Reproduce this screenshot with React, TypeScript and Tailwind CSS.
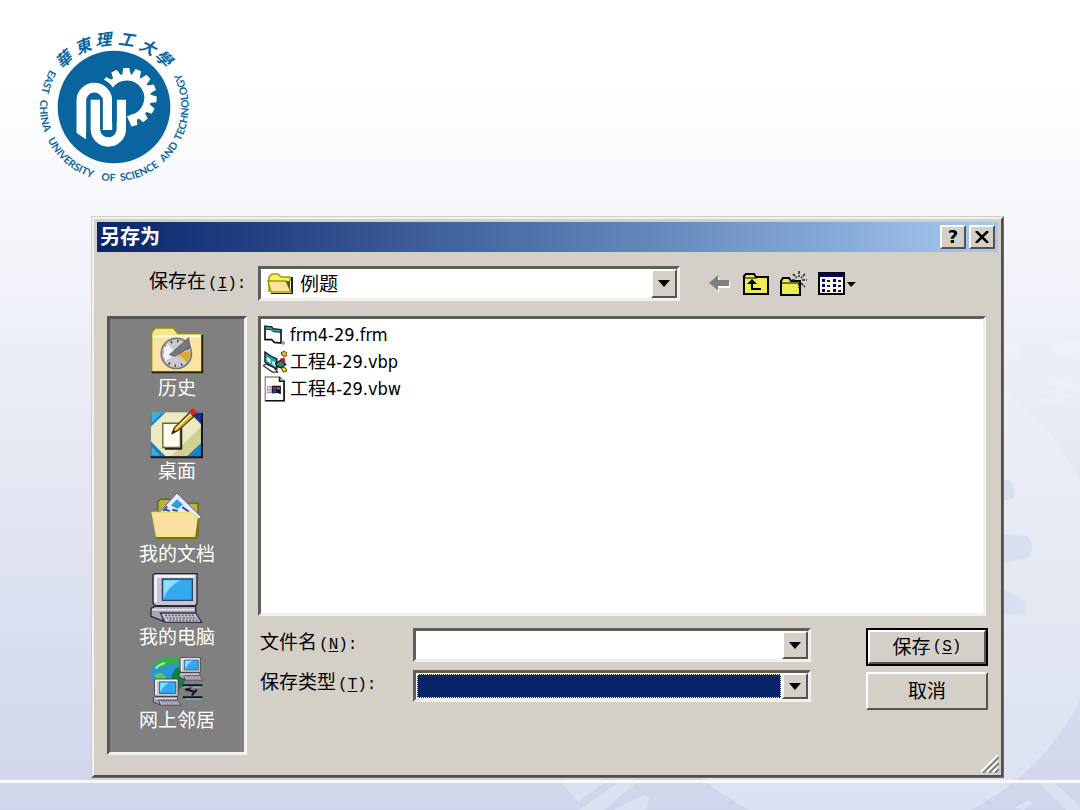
import { useState } from "react";
import type { ReactNode } from "react";

const raised = "bg-[#d4d0c8] border-2 border-t-white border-l-white border-r-[#55534f] border-b-[#55534f]";
const sunken = "bg-white border-[3px] border-t-[#5f5e5c] border-l-[#5f5e5c] border-r-[#f2f0ec] border-b-[#f2f0ec]";

function Backdrop() {
    return (
        <svg className="absolute inset-0 h-full w-full" viewBox="0 0 1080 810" preserveAspectRatio="xMidYMax slice" aria-hidden="true">
            <defs>
                <linearGradient id="disc" x1="0" y1="0" x2="0" y2="1">
                    <stop offset="0" stopColor="#eef1fa" />
                    <stop offset="0.5" stopColor="#e4e8f3" />
                    <stop offset="1" stopColor="#dce1f2" />
                </linearGradient>
            </defs>
            <circle cx="860" cy="590" r="246" fill="url(#disc)" />
            <g fill="#d9dfef">
                <path d="M990 476 L1010 481 Q1018 490 1013 498 L990 506Z" />
                <path d="M990 533 L1028 536 Q1035 546 1030 557 L1004 563 L990 568Z" />
                <path d="M990 582 L1006 590 L1026 603 Q1029 612 1024 615 L990 612Z" />
            </g>
            <g fill="#dce1f1">
                <path d="M562 783 L578 802 L604 783Z" />
                <path d="M579 810 L618 783 L636 783 L604 810Z" />
                <path d="M614 810 L644 795 L650 797 L646 810Z" />
                <path d="M1014 808 L1028 800 L1034 803 L1024 810Z" />
                <path d="M1040 783 L1054 783 L1080 806 V810 L1066 810Z" />
            </g>
            <g fill="#f1f3fb" opacity="0.5">
                <path d="M1048 346 L1080 338 V352 L1060 357Z" />
                <path d="M1050 374 L1080 384 V394 L1046 384Z" />
                <path d="M1040 398 L1072 393 L1062 404 L1040 403Z" />
                <path d="M1006 340 L1024 352 L1018 358 L1004 350Z" />
            </g>
        </svg>
    );
}

const sealChars = [
    { ch: "華", x: 129, y: 131, r: -42 },
    { ch: "東", x: 188, y: 91, r: -22 },
    { ch: "理", x: 250, y: 70, r: -6 },
    { ch: "工", x: 320, y: 70, r: 8 },
    { ch: "大", x: 385, y: 93, r: 28 },
    { ch: "學", x: 433, y: 127, r: 44 },
];

const sealWords = [
    { word: "EAST", offset: 2 },
    { word: "CHINA", offset: 98 },
    { word: "UNIVERSITY", offset: 222 },
    { word: "OF", offset: 430 },
    { word: "SCIENCE", offset: 488 },
    { word: "AND", offset: 632 },
    { word: "TECHNOLOGY", offset: 713 },
];

const teeth = [-52, -27, -2, 22, 46, 70, 94, 118, 142, 166];

function Logo() {
    return (
        <svg className="block h-[185px] w-[190px]" viewBox="0 0 570 555" fill="#0a659f" role="img" aria-label="East China University of Science and Technology">
            <defs>
                <path id="ring" d="M91 162 A223 223 0 1 0 454 133" />
            </defs>
            {sealChars.map((c) => (
                <text
                    key={c.ch}
                    transform={`translate(${c.x} ${c.y}) rotate(${c.r})`}
                    textAnchor="middle"
                    dominantBaseline="central"
                    className="text-[48px] font-bold italic [font-family:'Noto_Sans_CJK_TC',sans-serif]"
                >
                    {c.ch}
                </text>
            ))}
            {sealWords.map((w) => (
                <text key={w.word} className="text-[31px] font-bold [font-family:Lato,sans-serif]">
                    <textPath href="#ring" startOffset={w.offset}>{w.word}</textPath>
                </text>
            ))}
            <circle cx="282" cy="276" r="169" />
            <g fill="#fff">
                {teeth.map((a) => (
                    <path key={a} d="M307 192 L313 159 H331 L337 192Z" transform={`rotate(${a} 322 247)`} />
                ))}
            </g>
            <path d="M270 213 A62 62 0 1 1 330 310" fill="none" stroke="#fff" strokeWidth="20" />
            <g fill="none">
                <path stroke="#0a659f" strokeWidth="46" d="M184 370 V252 A41 41 0 0 1 266 252 V340" />
                <path stroke="#fff" strokeWidth="29" d="M184 351 V257 A39 39 0 0 1 262 257 V345" />
                <path stroke="#0a659f" strokeWidth="10" d="M206 250 V340 A56 56 0 0 0 296 372" />
                <path stroke="#fff" strokeWidth="28" d="M226 254 V342 A39 39 0 0 0 304 342 V254" />
            </g>
            <path fill="#fff" d="M170 350 H198 V373 L170 354Z" />
            <path d="M276 250 H290 V320 H276Z" />
            <path d="M240 248 H248 V342 H240Z" />
        </svg>
    );
}

function Folder({ className }: { className: string }) {
    return (
        <svg className={className} viewBox="0 0 27 22">
            <path d="M2 19 V4 L5 1 H11 L14 4 H23 V8" fill="#f6f06a" stroke="#a39a00" strokeWidth="1.5" />
            <path d="M24 4 H26 V21 H4 V20 H24Z" fill="#222" />
            <path d="M1 8 H19 L24 19 H4Z" fill="#ffe29a" stroke="#a39a00" strokeWidth="1.5" />
            <path d="M19 8 H23 V17Z" fill="#5d5800" />
        </svg>
    );
}

function HistoryIcon() {
    return (
        <svg className="h-12 w-[54px]" viewBox="0 0 156 140">
            <path d="M4 20 L14 6 H68 L80 22 H150 V134 H4Z" fill="#f2e790" stroke="#8f8f00" strokeWidth="4" />
            <path d="M8 32 H148 V128 H8Z" fill="#fbe3a4" />
            <path d="M8 30 H146" stroke="#ffffcf" strokeWidth="5" />
            <path d="M152 26 V135 H4" fill="none" stroke="#222200" strokeWidth="5" />
            <circle cx="76" cy="80" r="44" fill="#c9c9cf" stroke="#77777c" strokeWidth="5" />
            <circle cx="76" cy="80" r="36" fill="none" stroke="#34343a" strokeWidth="7" strokeDasharray="4 15" />
            <path d="M76 80 L120 72 L108 104Z" fill="#dba92b" />
            <path d="M44 102 A42 42 0 0 1 50 52 L76 80Z" fill="#f2f2f2" />
            <path d="M56 84 L112 34 L116 62 L72 88Z" fill="#77777e" stroke="#44444a" strokeWidth="2" />
        </svg>
    );
}

function DesktopIcon() {
    return (
        <svg className="h-[52px] w-[54px]" viewBox="0 0 160 154">
            <path d="M3 16 H152 V146 H3Z" fill="#e6e4b4" />
            <path d="M62 146 L152 58 V106 L112 146Z" fill="#d3ce94" />
            <path d="M44 16 H108 L152 58 L62 146 H44 L3 108 V56Z" fill="#eeedc6" opacity="0.7" />
            <g fill="#1583c8">
                <path d="M3 16 H46 L3 58Z" />
                <path d="M152 16 H118 L152 52Z" fill="#1c2f9b" />
                <path d="M3 146 V102 L46 146Z" />
                <path d="M152 146 V106 L110 146Z" />
            </g>
            <path d="M5 18 H36 L5 48Z" fill="#35aee2" />
            <path d="M5 144 V118 L30 144Z" fill="#35aee2" />
            <path d="M154 18 V149 H2" fill="none" stroke="#111827" strokeWidth="6" />
            <path d="M38 48 H90 V120 H38Z" fill="#fffff1" stroke="#686743" strokeWidth="4" />
            <path d="M93 52 V124 H44" fill="none" stroke="#25251b" strokeWidth="5" />
            <path d="M66 78 L72 62 L118 16 L130 28 L82 70Z" fill="#f0b81f" stroke="#4e3900" strokeWidth="4" />
            <path d="M76 64 L122 20" stroke="#fff0a0" strokeWidth="4" />
            <path d="M116 14 L126 4 L139 12 L130 26Z" fill="#e2201c" />
            <path d="M65 80 L69 68 L76 73Z" fill="#111" />
        </svg>
    );
}

function DocumentsIcon() {
    return (
        <svg className="h-12 w-[54px]" viewBox="0 0 160 146">
            <path d="M22 70 V30 L30 22 H56 L66 34 H144 V130 H30Z" fill="#b9b43e" stroke="#66660a" strokeWidth="4" />
            <path d="M26 62 L80 3 L154 76 L142 86 L60 84Z" fill="#e8ecff" stroke="#5360a8" strokeWidth="3" />
            <path d="M62 40 L80 22 L98 38 L82 52Z" fill="#2b9fd8" />
            <path d="M46 54 L58 58 M66 54 L82 58 M96 46 L116 60 M50 44 L38 58" stroke="#3c4a91" strokeWidth="6" />
            <path d="M4 62 H118 L130 68 L146 80 L138 138 H18Z" fill="#f9dfa0" stroke="#e8e36d" strokeWidth="4" />
            <path d="M16 140 H138 L146 80" fill="none" stroke="#777600" strokeWidth="6" />
        </svg>
    );
}

function Computer({ x = 0, y = 0, scale = 1 }: { x?: number; y?: number; scale?: number }) {
    return (
        <g transform={`translate(${x} ${y}) scale(${scale})`}>
            <path d="M8 6 L14 2 H140 V92 L134 98 H14 L8 90Z" fill="#c9c4d4" stroke="#25252c" strokeWidth="4" />
            <path d="M12 6 H132 V14 H20 V88 H12Z" fill="#f4f1f8" />
            <path d="M36 18 H126 V82 H36Z" fill="#35a9ee" stroke="#27476a" strokeWidth="4" />
            <path d="M40 22 H90 Q54 40 40 76Z" fill="#8ae1ff" />
            <path d="M50 98 H112 L100 108 H62Z" fill="#54505f" />
            <path d="M2 106 L14 100 H136 V122 H38 V144 L2 130Z" fill="#a9a5b1" stroke="#2b2930" strokeWidth="4" />
            <path d="M6 110 H132" stroke="#eae6f0" strokeWidth="5" />
            <path d="M30 120 H136 L154 148 H44Z" fill="#cbc5cf" stroke="#36324b" strokeWidth="4" />
            <path d="M44 127 H134 M48 135 H140 M56 142 H144" stroke="#6e6678" strokeWidth="5" strokeDasharray="6 4" />
        </g>
    );
}

function ComputerIcon() {
    return (
        <svg className="h-[52px] w-[54px]" viewBox="0 0 160 156">
            <Computer />
        </svg>
    );
}

function NetworkIcon() {
    return (
        <svg className="h-[52px] w-[54px]" viewBox="0 0 160 156">
            <circle cx="56" cy="54" r="52" fill="#2697dc" />
            <path d="M10 28 Q36 -4 84 6 L90 20 L70 28 L62 22 L42 34 L24 36Z" fill="#36b04b" />
            <path d="M76 36 L104 34 L108 60 Q102 90 84 102 L74 78 L62 62Z" fill="#15803a" />
            <path d="M12 54 L34 50 L48 64 L34 84 L20 80Z" fill="#58c95a" />
            <path d="M16 38 Q28 24 44 22" stroke="#aef09a" strokeWidth="6" fill="none" />
            <path d="M96 88 H156 M104 100 L136 108 M128 88 L112 100 M140 100 L124 118 M98 124 H156" stroke="#10151d" strokeWidth="6" />
            <path d="M100 93 H152 M104 129 H154" stroke="#77cfe2" strokeWidth="3" />
            <Computer x={86} y={4} scale={0.46} />
            <Computer x={8} y={68} scale={0.54} />
        </svg>
    );
}

const places: { label: string; icon: ReactNode }[] = [
    { label: "历史", icon: <HistoryIcon /> },
    { label: "桌面", icon: <DesktopIcon /> },
    { label: "我的文档", icon: <DocumentsIcon /> },
    { label: "我的电脑", icon: <ComputerIcon /> },
    { label: "网上邻居", icon: <NetworkIcon /> },
];

function FormIcon() {
    return (
        <svg className="h-6 w-6" viewBox="0 0 72 72">
            <path d="M6 10 L26 12 L30 18 L54 20 V60 L34 58 L26 50 L6 50Z" fill="#fff" stroke="#111" strokeWidth="5" />
            <path d="M6 10 L26 12 L30 18 L54 20 V28 L30 26 L24 20 L6 18Z" fill="#21b3b0" stroke="#123" strokeWidth="3" />
            <path d="M60 54 V66 M54 60 H66" stroke="#888" strokeWidth="4" />
        </svg>
    );
}

function ProjectIcon() {
    return (
        <svg className="h-6 w-6" viewBox="0 0 76 72">
            <path d="M1 48 L30 68 H46 L34 52 L8 42Z" fill="#fff" stroke="#333" strokeWidth="4" />
            <path d="M6 4 L26 18 L44 26 V58 L24 48 L6 36Z" fill="#1fa7a2" stroke="#111" strokeWidth="4" />
            <path d="M12 20 L24 28 V40 L12 32Z M30 32 L40 38 V50 L30 44Z" fill="#fff" />
            <path d="M40 40 L58 30 L72 44 L58 54 L44 50Z" fill="#17928d" stroke="#111" strokeWidth="4" />
            <path d="M54 26 L68 22 L70 36 L58 38Z" fill="#c3141b" />
            <path d="M58 6 L68 2 L76 8 V16 L66 18 L60 14Z" fill="#e8c32e" stroke="#443600" strokeWidth="3" />
            <path d="M58 56 L66 52 L74 58 V66 L64 68Z" fill="#e8d02e" stroke="#443600" strokeWidth="3" />
        </svg>
    );
}

function WorkspaceIcon() {
    return (
        <svg className="h-[26px] w-6" viewBox="0 0 72 80">
            <path d="M6 3 H50 L64 16 V76 H6Z" fill="#fff" stroke="#8a8a8a" strokeWidth="4" />
            <path d="M50 3 V16 H64 V76 H6" fill="none" stroke="#111" strokeWidth="5" />
            <path d="M26 30 H54 V56 L44 52 L26 54Z" fill="#111" />
            <path d="M30 34 H40 V42 H30Z" fill="#d92626" />
            <path d="M42 34 H51 V42 H42Z" fill="#2d9b43" />
            <path d="M30 44 H40 V51 H30Z" fill="#2640d9" />
            <path d="M12 34 H28 M12 42 H28 M12 50 H28" stroke="#5a44c9" strokeWidth="5" strokeDasharray="4 3" />
        </svg>
    );
}

const files: { name: string; icon: ReactNode }[] = [
    { name: "frm4-29.frm", icon: <FormIcon /> },
    { name: "工程4-29.vbp", icon: <ProjectIcon /> },
    { name: "工程4-29.vbw", icon: <WorkspaceIcon /> },
];

function Arrow() {
    return (
        <span className={`${raised} flex w-[26px] shrink-0 items-center justify-center`} aria-hidden="true">
            <svg className="h-[7px] w-3" viewBox="0 0 12 7"><path d="M0 0 H12 L6 7Z" fill="#000" /></svg>
        </span>
    );
}

function Key({ letter, colon = true }: { letter: string; colon?: boolean }) {
    return (
        <span className="ml-0.5 text-base leading-6 [font-family:'Liberation_Mono',monospace]">
            (<u className="underline-offset-2">{letter}</u>){colon && ":"}
        </span>
    );
}

function Toolbar() {
    return (
        <div className="flex items-center gap-[11px]">
            <button type="button" aria-label="后退" className="flex w-6 justify-center">
                <svg className="h-[18px] w-[22px]" viewBox="0 0 22 18">
                    <path d="M2 10 L10 2 V7 H21 V13 H10 V18Z" fill="#fff" />
                    <path d="M0 8 L9 0 V5 H20 V11 H9 V16Z" fill="#808080" />
                </svg>
            </button>
            <button type="button" aria-label="向上一级">
                <svg className="h-[22px] w-[26px]" viewBox="0 0 26 22">
                    <path d="M1 21 V3 L3 1 H11 L13 4 H25 V21Z" fill="#ecec55" stroke="#000" strokeWidth="2" />
                    <path d="M1 5 H14" stroke="#000" />
                    <path d="M18 16 H9 V9" fill="none" stroke="#000" strokeWidth="2" />
                    <path d="M4 11 L9 6 L14 11Z" />
                </svg>
            </button>
            <button type="button" aria-label="新建文件夹">
                <svg className="h-[26px] w-[27px]" viewBox="0 0 27 26">
                    <path d="M1 24 V10 L3 7 H9 L11 10 H20 V24Z" fill="#ecec55" stroke="#000" strokeWidth="2" />
                    <path d="M1 12 H19" stroke="#000" />
                    <path d="M19 0 V6 M19 12 V17 M12 9 H16 M22 9 H27 M13 3 L17 7 M25 3 L21 7 M21 12 L25 16" stroke="#222" strokeWidth="1.5" strokeDasharray="3 1" />
                </svg>
            </button>
            <button type="button" aria-label="查看">
                <svg className="h-[23px] w-[38px]" viewBox="0 0 38 23">
                    <path d="M1 1 H26 V22 H1Z" fill="#fff" stroke="#000" strokeWidth="2" />
                    <path d="M1 1 H26 V5 H1Z" fill="#000064" />
                    <path d="M4 7 H7 V10 H4Z M4 12 H7 V15 H4Z M4 17 H7 V20 H4Z M15 7 H18 V10 H15Z M15 12 H18 V15 H15Z M15 17 H18 V20 H15Z" fill="#000080" />
                    <path d="M9 9 H12 M9 14 H12 M9 19 H12 M20 9 H23 M20 14 H23 M20 19 H23" stroke="#222" strokeWidth="2" />
                    <path d="M29 10 H38 L33 15Z" />
                </svg>
            </button>
        </div>
    );
}

function SaveDialog() {
    const [fileName, setFileName] = useState("");

    return (
        <div
            role="dialog"
            aria-labelledby="title"
            className="relative flex flex-col border-[3px] border-t-[#f4f2ee] border-l-[#f4f2ee] border-r-[#504f4d] border-b-[#504f4d] bg-[#d4d0c8] px-[3px] pt-[3px] pb-5 outline-1 -outline-offset-1 outline-[#9a9893]/40"
        >
            <div className="flex h-[30px] items-center gap-[3px] bg-linear-to-r from-[#0a246a] to-[#a6caf0] pr-[3px] pl-[3px]">
                <h1 id="title" className="flex-1 text-xl leading-6 font-bold text-white">另存为</h1>
                <button type="button" aria-label="帮助" className={`${raised} flex h-6 w-[26px] items-center justify-center font-['DejaVu_Sans'] text-lg leading-none font-bold`}>?</button>
                <button type="button" aria-label="关闭" className={`${raised} flex h-6 w-[26px] items-center justify-center`}>
                    <svg className="h-3 w-[14px]" viewBox="0 0 14 12"><path d="M1 0 L13 12 M13 0 L1 12" stroke="#000" strokeWidth="2.5" /></svg>
                </button>
            </div>

            <div className="mt-[14px] flex items-center pl-[52px]">
                <label htmlFor="place" className="w-[109px] shrink-0 pb-0.5 whitespace-nowrap">保存在<Key letter="I" /></label>
                <div className={`${sunken} flex h-[35px] w-[422px] items-stretch`}>
                    <span className="flex items-center pl-1.5"><Folder className="h-[22px] w-[27px]" /></span>
                    <select id="place" className="min-w-0 flex-1 appearance-none bg-transparent pl-1.5 outline-none">
                        <option>例题</option>
                    </select>
                    <Arrow />
                </div>
                <div className="ml-7"><Toolbar /></div>
            </div>

            <div className="mt-[15px] flex gap-[11px] pr-[10px] pl-[10px]">
                <nav className="w-[140px] shrink-0 border-[3px] border-t-[#55555a] border-r-[#f4f2ee] border-b-[#f4f2ee] border-l-[#55555a] bg-[#808080] pt-[5px] pb-[13px]">
                    {places.map((p) => (
                        <button key={p.label} type="button" className="flex h-[83px] w-full flex-col items-center text-white">
                            <span className="flex h-[52px] items-center">{p.icon}</span>
                            <span className="leading-6">{p.label}</span>
                        </button>
                    ))}
                </nav>

                <div className="flex min-w-0 flex-1 flex-col">
                    <ul className={`${sunken} mr-0.5 h-[300px] pt-0.5 pl-0.5 text-lg`}>
                        {files.map((f) => (
                            <li key={f.name} className="flex h-[27px] items-center gap-[3px]">
                                {f.icon}
                                <span className="whitespace-nowrap">{f.name}</span>
                            </li>
                        ))}
                    </ul>

                    <div className="mt-3 flex items-start justify-between">
                        <div className="grid grid-cols-[155px_398px] gap-y-2">
                            <label htmlFor="name" className="pt-0.5 pl-0.5">文件名<Key letter="N" /></label>
                            <div className={`${sunken} flex h-[34px] items-stretch`}>
                                <input
                                    id="name"
                                    type="text"
                                    value={fileName}
                                    onChange={(e) => setFileName(e.target.value)}
                                    className="min-w-0 flex-1 px-1 outline-none"
                                />
                                <Arrow />
                            </div>
                            <label htmlFor="type" className="pl-0.5">保存类型<Key letter="T" /></label>
                            <div className={`${sunken} flex h-8 items-stretch`}>
                                <select id="type" className="m-px min-w-0 flex-1 appearance-none border border-dotted border-[#f5f5b0] bg-[#0a246a] text-white outline-none">
                                    <option></option>
                                </select>
                                <Arrow />
                            </div>
                        </div>
                        <div className="flex w-[122px] flex-col gap-1.5">
                            <button type="submit" className="h-[38px] border-2 border-black">
                                <span className={`${raised} flex h-full items-center justify-center`}>保存<Key letter="S" colon={false} /></span>
                            </button>
                            <button type="button" className={`${raised} h-[38px]`}>取消</button>
                        </div>
                    </div>
                </div>
            </div>

            <svg className="absolute right-0.5 bottom-0.5 h-[18px] w-[18px]" viewBox="0 0 18 18" aria-hidden="true">
                <path d="M0 17 L17 0 M6 17 L17 6 M12 17 L17 12" stroke="#fff" strokeWidth="2" />
                <path d="M2 18 L18 2 M8 18 L18 8 M14 18 L18 14" stroke="#808080" strokeWidth="2" />
            </svg>
        </div>
    );
}

export default function App() {
    return (
        <div className="relative min-h-screen overflow-hidden bg-linear-to-b from-white from-10% via-[#e6e9f4] via-55% to-[#cfd5ea] text-[19px] leading-6 text-black [font-family:'DejaVu_Sans_Condensed','Noto_Sans_CJK_SC',sans-serif]">
            <Backdrop />
            <div className="absolute inset-x-0 bottom-[27px] h-[3px] bg-[#f8f9fd]" />
            <div className="relative">
                <header className="pt-[15px] pl-5"><Logo /></header>
                <main className="mt-4 mr-[76px] ml-[91px]">
                    <SaveDialog />
                </main>
            </div>
        </div>
    );
}
